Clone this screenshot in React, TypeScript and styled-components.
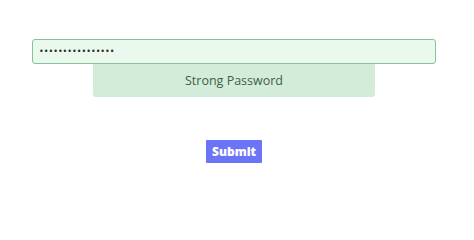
import React, { useState } from 'react'
import styled, { createGlobalStyle } from 'styled-components'

const GlobalStyle = createGlobalStyle`
  body {
    margin: 0;
    background: #ffffff;
    font-family: 'Open Sans', 'Noto Sans', sans-serif;
  }
`

const Page = styled.div`
  padding: 39px 38px 0 32px;
  display: flex;
  flex-direction: column;
  align-items: center;
`

const Field = styled.div`
  width: 100%;
  display: flex;
  flex-direction: column;
  align-items: center;
`

const PasswordInput = styled.input`
  box-sizing: border-box;
  width: 100%;
  height: 25px;
  padding: 0 6px;
  border: 1px solid #86c39a;
  border-radius: 3px;
  background: #ebf8ee;
  color: #243128;
  caret-color: #243128;
  font-family: 'DejaVu Sans', sans-serif;
  font-size: 8px;
  outline: none;
`

const Strength = styled.div<{ $level: 'weak' | 'strong' }>`
  box-sizing: border-box;
  width: 70%;
  height: 33px;
  display: flex;
  align-items: center;
  justify-content: center;
  border-radius: 0 0 3px 3px;
  background: ${({ $level }) => ($level === 'strong' ? '#d3ecd9' : '#f6d6d6')};
  color: ${({ $level }) => ($level === 'strong' ? '#3d5e47' : '#7a3a3a')};
  font-size: 12.5px;
`

const SubmitButton = styled.button`
  margin-top: 43px;
  width: 56px;
  height: 23px;
  border: none;
  border-radius: 1px;
  background: #6b73f7;
  color: #ffffff;
  font-family: 'Open Sans', sans-serif;
  font-weight: 800;
  font-size: 12px;
  cursor: pointer;
`

export default function App() {
  const [password, setPassword] = useState('Tr0ub4dor&3Horse')

  return (
    <>
      <GlobalStyle />
      <Page>
        <Field>
          <PasswordInput
            type="password"
            value={password}
            autoFocus
            onChange={e => setPassword(e.target.value)}
          />
          <Strength $level="strong">Strong Password</Strength>
        </Field>
        <SubmitButton type="button">Submit</SubmitButton>
      </Page>
    </>
  )
}
